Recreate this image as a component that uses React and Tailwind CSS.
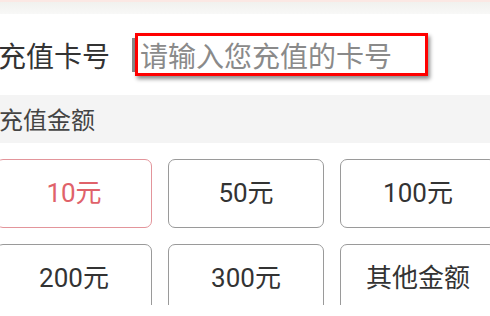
export default function App() {
  const amounts = ["10元", "50元", "100元", "200元", "300元", "其他金额"];
  const cjk = { fontFamily: '"Noto Sans CJK SC", sans-serif' };
  return (
    <div
      className="w-[490px] h-[316px] overflow-hidden bg-white relative"
      style={{ fontFamily: 'Roboto, "Noto Sans CJK SC", sans-serif' }}
    >
      <div className="h-[2px] bg-[#fbe8e4]" />
      <div className="h-[12px] bg-gradient-to-b from-[#f1f1ee] to-[#f8f8f7]" />
      <div className="h-[81px] flex items-center">
        <span style={cjk} className="ml-[-2px] text-[28px] leading-none text-[#333]">充值卡号</span>
        <div className="ml-[25px] relative h-[43px] w-[293px]">
          <div className="absolute left-[-3px] top-[5px] h-[34px] w-[4px] bg-[#8a8a8a]" />
          <div className="absolute inset-0 border-[3px] border-[#ff0000] shadow-[2px_3px_4px_rgba(0,0,0,0.45)] flex items-center pl-[2px]">
            <span style={cjk} className="text-[28px] leading-none text-[#8a8a8a] whitespace-nowrap">请输入您充值的卡号</span>
          </div>
        </div>
      </div>
      <div className="h-[48px] bg-[#f4f4f4] flex items-center">
        <span style={cjk} className="ml-[-1px] text-[24px] leading-none text-[#444]">充值金额</span>
      </div>
      <div className="h-[162px] overflow-hidden pt-[16px]">
        <div className="ml-[-4px] w-[500px] grid grid-cols-3 gap-[16px]">
          {amounts.map((a, i) => (
            <div
              key={a}
              className={
                "h-[69px] rounded-[7px] border-[1.5px] flex items-center justify-center text-[26px] " +
                (i === 0
                  ? "border-[#e3959b] text-[#e0626a]"
                  : "border-[#9a9a9a] text-[#333]")
              }
            >
              {a}
            </div>
          ))}
        </div>
      </div>
    </div>
  );
}
